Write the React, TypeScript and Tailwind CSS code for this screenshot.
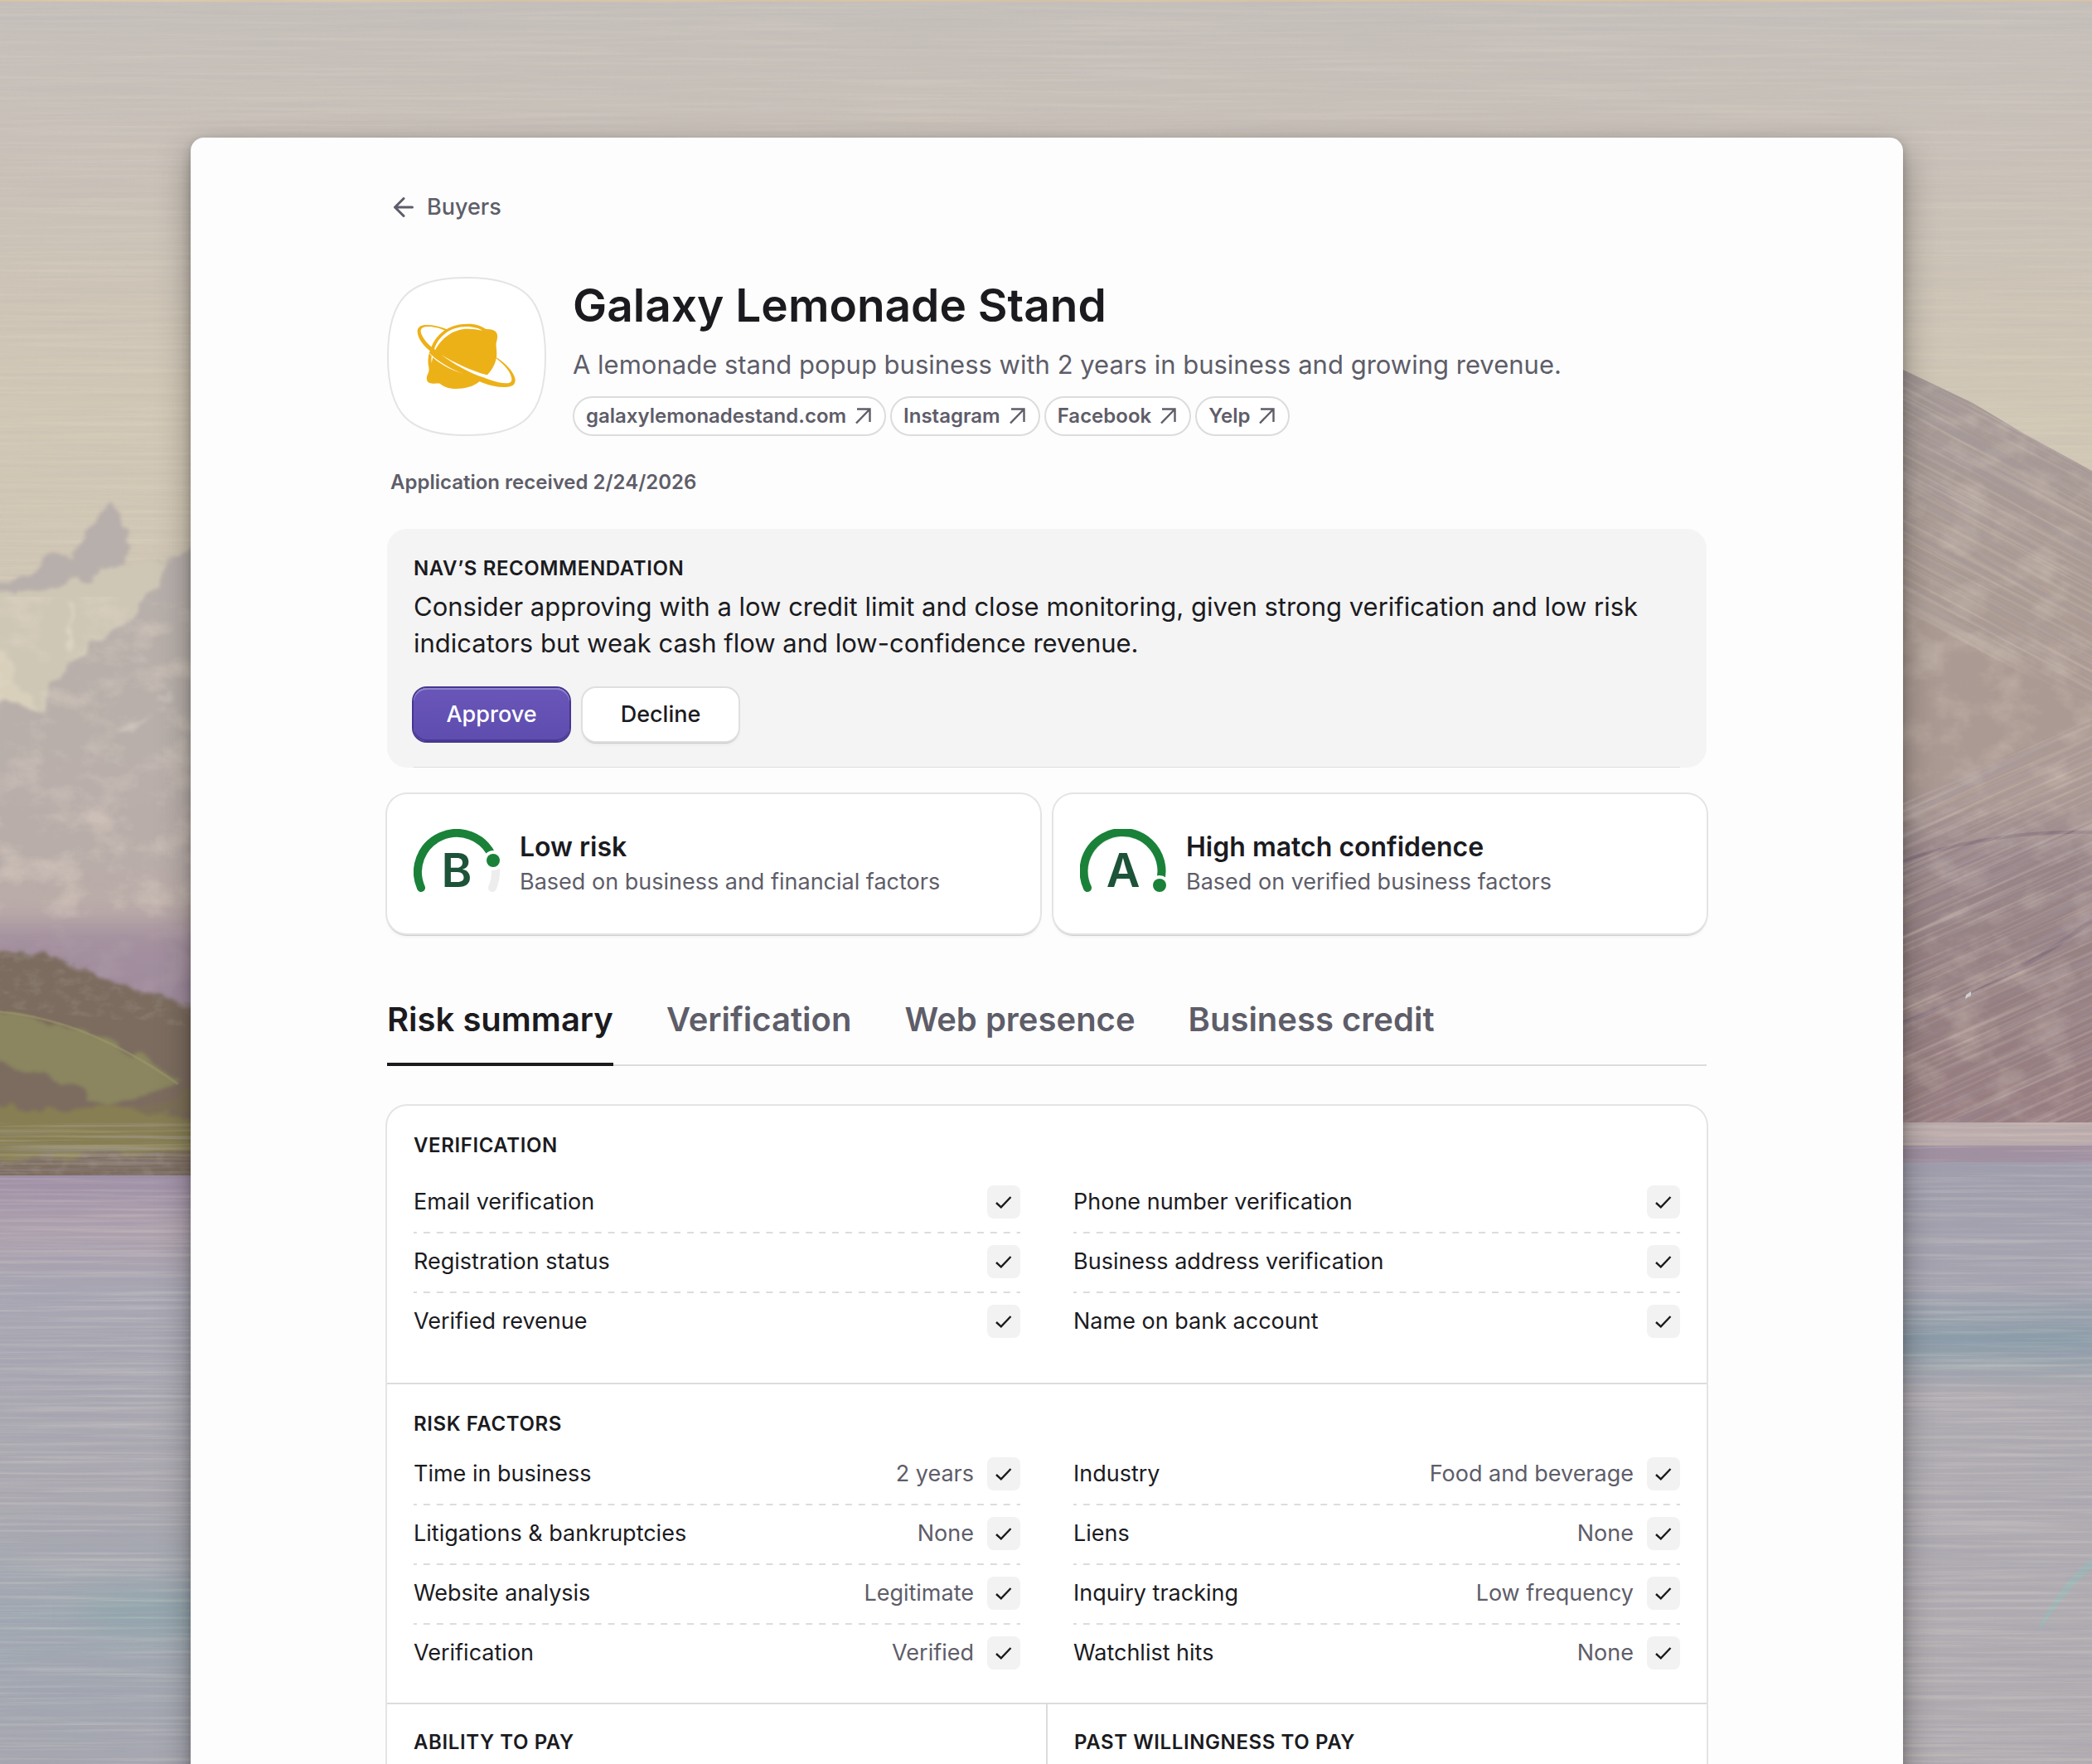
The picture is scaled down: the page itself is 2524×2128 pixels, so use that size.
import { useState } from "react";

const links = ["galaxylemonadestand.com", "Instagram", "Facebook", "Yelp"];

const tabs = ["Risk summary", "Verification", "Web presence", "Business credit"];

type Item = { label: string; value?: string };

const verification: Item[][] = [
  [{ label: "Email verification" }, { label: "Registration status" }, { label: "Verified revenue" }],
  [
    { label: "Phone number verification" },
    { label: "Business address verification" },
    { label: "Name on bank account" },
  ],
];

const riskFactors: Item[][] = [
  [
    { label: "Time in business", value: "2 years" },
    { label: "Litigations & bankruptcies", value: "None" },
    { label: "Website analysis", value: "Legitimate" },
    { label: "Verification", value: "Verified" },
  ],
  [
    { label: "Industry", value: "Food and beverage" },
    { label: "Liens", value: "None" },
    { label: "Inquiry tracking", value: "Low frequency" },
    { label: "Watchlist hits", value: "None" },
  ],
];

function Painting() {
  return (
    <svg
      className="absolute inset-0 h-full w-full"
      viewBox="0 0 2524 2128"
      preserveAspectRatio="xMidYMid slice"
      aria-hidden="true"
    >
      <defs>
        <linearGradient id="sky" x1="0" y1="0" x2="0" y2="1">
          <stop offset="0" stopColor="#c5bfba" />
          <stop offset="0.2" stopColor="#c9c1b8" />
          <stop offset="0.5" stopColor="#d1c7b5" />
          <stop offset="1" stopColor="#cfc4b2" />
        </linearGradient>
        <linearGradient id="slope" x1="0" y1="0" x2="0" y2="1">
          <stop offset="0" stopColor="#b7afab" />
          <stop offset="0.4" stopColor="#b8afaa" />
          <stop offset="0.75" stopColor="#baaba8" />
          <stop offset="1" stopColor="#9f8c9c" />
        </linearGradient>
        <linearGradient id="ridge" x1="0" y1="0" x2="0" y2="1">
          <stop offset="0" stopColor="#a49896" />
          <stop offset="0.35" stopColor="#ab9b93" />
          <stop offset="0.58" stopColor="#ab9993" />
          <stop offset="0.66" stopColor="#988588" />
          <stop offset="0.85" stopColor="#967f80" />
          <stop offset="1" stopColor="#977d80" />
        </linearGradient>
        <linearGradient id="lake" x1="0" y1="0" x2="0" y2="1">
          <stop offset="0" stopColor="#9f8fa6" />
          <stop offset="0.09" stopColor="#ada0ac" />
          <stop offset="0.2" stopColor="#a7a6b2" />
          <stop offset="0.55" stopColor="#aba9b0" />
          <stop offset="0.75" stopColor="#9fa8b1" />
          <stop offset="1" stopColor="#a6a7b0" />
        </linearGradient>
        <linearGradient id="lakeRight" x1="0" y1="0" x2="0" y2="1">
          <stop offset="0" stopColor="#9d9cab" />
          <stop offset="0.25" stopColor="#a7a5b0" />
          <stop offset="0.34" stopColor="#8a9da9" />
          <stop offset="0.42" stopColor="#aeabb1" />
          <stop offset="1" stopColor="#b0acb0" />
        </linearGradient>
        <clipPath id="ridgeClip">
          <path d="M1700 420 L2296 446 L2380 486 L2440 522 L2524 568 V1354 H1700 Z" />
        </clipPath>
        <filter id="soft" x="-50%" y="-50%" width="200%" height="200%">
          <feGaussianBlur stdDeviation="14" />
        </filter>
        <filter id="rough">
          <feTurbulence type="fractalNoise" baseFrequency="0.03 0.04" numOctaves="5" seed="4" />
          <feDisplacementMap in="SourceGraphic" scale="24" xChannelSelector="R" yChannelSelector="G" />
          <feGaussianBlur stdDeviation="2" />
        </filter>
        <filter id="strokes" x="0" y="0" width="100%" height="100%">
          <feTurbulence type="fractalNoise" baseFrequency="0.004 0.24" numOctaves="4" seed="8" />
          <feColorMatrix values="0 0 0 0 0.98  0 0 0 0 0.9  0 0 0 0 0.76  1.8 0 0 0 -0.8" />
        </filter>
        <filter id="shade" x="0" y="0" width="100%" height="100%">
          <feTurbulence type="fractalNoise" baseFrequency="0.005 0.2" numOctaves="4" seed="21" />
          <feColorMatrix values="0 0 0 0 0.35  0 0 0 0 0.32  0 0 0 0 0.45  1.8 0 0 0 -0.8" />
        </filter>
        <filter id="dabs" x="0" y="0" width="100%" height="100%">
          <feTurbulence type="fractalNoise" baseFrequency="0.02 0.03" numOctaves="5" seed="30" />
          <feColorMatrix values="0 0 0 0 0.86  0 0 0 0 0.76  0 0 0 0 0.64  2.4 0 0 0 -1.1" />
        </filter>
        <filter id="foliage" x="0" y="0" width="100%" height="100%">
          <feTurbulence type="fractalNoise" baseFrequency="0.06 0.1" numOctaves="4" seed="13" result="noise" />
          <feColorMatrix in="noise" values="0 0 0 0 0.25  0 0 0 0 0.2  0 0 0 0 0.16  3 0 0 0 -1.4" />
          <feComposite operator="in" in2="SourceGraphic" />
        </filter>
      </defs>

      <rect width="2524" height="1000" fill="url(#sky)" />
      <rect width="2524" height="2" fill="#d8c4a6" />
      <rect width="2524" height="800" filter="url(#strokes)" opacity="0.16" />
      <rect width="2524" height="800" filter="url(#shade)" opacity="0.1" />

      {/* Left mountains */}
      <g filter="url(#rough)">
        <path d="M-40 715 L20 702 L60 670 L92 668 L125 607 L150 622 L153 680 L205 675 L230 655 L700 600 V1300 H-40 Z" fill="url(#slope)" />
        <path d="M-40 718 L60 709 L105 700 L150 680 L205 676 L160 745 L95 790 L60 825 L55 858 L0 842 L-40 835 Z" fill="#cfc7b6" />
        <path d="M-20 780 L5 780 L25 830 L48 855 L-20 845 Z" fill="#d9d0bc" />
        <path d="M80 730 L84 785" stroke="#dcd4c2" strokeWidth="4" />
        <path d="M140 888 L155 872 L185 858 L160 885 Z" fill="#c8c0b8" />
        <path d="M190 840 L208 826 L204 844 Z" fill="#c4bdb6" />
      </g>
      <rect y="720" width="240" height="480" filter="url(#dabs)" opacity="0.35" />
      <rect x="-40" y="1115" width="420" height="110" fill="#957f99" opacity="0.6" filter="url(#soft)" />

      {/* Left shore */}
      <g filter="url(#rough)">
        <path d="M-40 1145 L80 1155 L140 1190 L240 1212 L400 1230 V1450 H-40 Z" fill="#7b6c5e" />
        <path d="M-40 1218 Q100 1222 220 1305 L130 1335 Q60 1290 -40 1275 Z" fill="#8b865f" />
        <path d="M-40 1340 L120 1336 L230 1350 L250 1390 L-40 1402 Z" fill="#877e53" />
        <path d="M160 1345 L250 1310 V1345 Z" fill="#7d7058" />
      </g>
      <path
        d="M-10 1145 L80 1155 L140 1190 L240 1212 V1240 L60 1222 L-10 1214 Z M-10 1390 H240 V1418 H-10 Z"
        fill="#000"
        filter="url(#foliage)"
        opacity="0.7"
      />
      <path d="M-10 1220 Q100 1226 215 1308" stroke="#a09a6c" strokeWidth="3" fill="none" opacity="0.5" />

      {/* Right mountains */}
      <g clipPath="url(#ridgeClip)">
        <rect x="1700" y="400" width="824" height="960" fill="url(#ridge)" />
        <path d="M2280 1240 Q2420 1190 2524 1110" stroke="#78626f" strokeWidth="5" fill="none" opacity="0.5" />
        <path d="M2280 1044 Q2400 1000 2530 1004" stroke="#78626f" strokeWidth="4" fill="none" opacity="0.5" />
        <g transform="rotate(28 2400 700)" opacity="0.3">
          <rect x="2000" y="340" width="900" height="440" filter="url(#strokes)" />
          <rect x="2000" y="340" width="900" height="440" filter="url(#shade)" />
        </g>
        <g transform="rotate(-24 2400 1180)" opacity="0.36">
          <rect x="2000" y="940" width="900" height="560" filter="url(#strokes)" />
          <rect x="2000" y="940" width="900" height="560" filter="url(#shade)" />
        </g>
        <rect x="2290" y="440" width="240" height="914" filter="url(#dabs)" opacity="0.25" />
      </g>
      <path d="M2372 1200 l6 -4 v5 l-7 4z" fill="#cfcfd0" />

      {/* Water */}
      <rect y="1418" width="1262" height="710" fill="url(#lake)" />
      <rect x="1262" y="1354" width="1262" height="774" fill="url(#lakeRight)" />
      <rect x="1262" y="1354" width="1262" height="28" fill="#bcacab" />
      <rect x="1262" y="1382" width="1262" height="20" fill="#a090a0" />
      <ellipse cx="200" cy="1945" rx="110" ry="26" fill="#8aa5aa" opacity="0.6" filter="url(#soft)" />
      <path d="M2458 1965 Q2490 1905 2524 1880 V1892 Q2500 1910 2462 1965 Z" fill="#9bb8b6" opacity="0.8" />
      <rect y="1354" width="2524" height="774" filter="url(#strokes)" opacity="0.3" />
      <rect y="1354" width="2524" height="774" filter="url(#shade)" opacity="0.4" />
    </svg>
  );
}

function Logo() {
  return (
    <svg className="size-48 shrink-0" viewBox="22 27 576 576" role="img" aria-label="Galaxy Lemonade Stand">
      <path
        d="M25 315 C25 105 100 30 310 30 C520 30 595 105 595 315 C595 525 520 600 310 600 C100 600 25 525 25 315 Z"
        fill="#fff"
        stroke="#e4e4e4"
        strokeWidth="6"
      />
      <g fill="#edb118">
        <path d="M181 286 C197 236 243 197 315 197 C345 197 363 205 380 216 C395 217 402 217 411 222 C426 232 422 250 417 266 C416 280 419 290 419 305 C418 337 403 363 383 383 C376 392 367 398 357 405 C335 424 305 432 272 432 C243 432 226 423 213 413 C203 412 197 414 187 413 C165 412 163 398 167 384 C174 372 174 366 173 355 C169 337 170 320 174 303 Z" />
        <path
          fillRule="evenodd"
          d="M243 218 C215 207 190 201 165 201 C140 201 131 212 132 227 C134 254 157 280 189 305 C245 350 318 390 370 411 C400 422 425 427 451 426 C477 425 487 415 486 398 C481 369 449 338 416 317 L417 322 C446 345 471 372 473 396 C474 407 467 412 451 412 C420 411 375 394 340 377 C290 353 238 322 218 308 L181 279 C160 262 146 239 144 225 C143 214 151 208 168 207 C190 206 217 213 235 223 Z"
        />
      </g>
      <g fill="#fff">
        <path d="M218 308 C260 335 325 366 383 382 C404 391 385 396 370 391 C318 373 262 342 218 308 Z" />
        <path d="M171 299 C205 332 250 360 300 378 C250 363 205 339 175 305 Z" />
        <path d="M193 288 C210 236 262 201 324 208 C342 210 355 214 367 221 C348 217 335 215 316 215 C265 214 220 246 197 291 Z" />
        <path d="M184 340 C181 329 182 320 184 311 L189 315 C186 324 184 331 184 340 Z" />
      </g>
    </svg>
  );
}

function Gauge({ grade, dot }: { grade: string; dot: [number, number] }) {
  return (
    <svg className="h-[84px] w-[104px] shrink-0" viewBox="0 0 104 84">
      <path d="M9 71 A47 47 0 1 1 95 71" fill="none" stroke="#ededed" strokeWidth="10" strokeLinecap="round" />
      <path
        d={dot[1] < 60 ? "M9 71 A47 47 0 0 1 95 33" : "M9 71 A47 47 0 1 1 96 66"}
        fill="none"
        stroke="#1a8139"
        strokeWidth="10"
        strokeLinecap="round"
      />
      <circle cx={dot[0]} cy={dot[1]} r="12" fill="#fff" />
      <circle cx={dot[0]} cy={dot[1]} r="8" fill="#1a8139" />
      <text x="52" y="70" textAnchor="middle" fontSize="56" fontWeight="600" fill="#1d5338">
        {grade}
      </text>
    </svg>
  );
}

function ScoreCard({ grade, dot, title, text }: { grade: string; dot: [number, number]; title: string; text: string }) {
  return (
    <div className="flex flex-1 items-center gap-6 rounded-3xl bg-white px-8 py-[42px] shadow-[0_0_0_2px_#e4e4e4,0_2px_0_1px_#cfcfcf,0_4px_4px_rgba(0,0,0,0.06)]">
      <Gauge grade={grade} dot={dot} />
      <div>
        <h2 className="text-[32px] leading-[44px] font-semibold">{title}</h2>
        <p className="text-[27px] leading-[40px] text-[#5e5d69]">{text}</p>
      </div>
    </div>
  );
}

function Check() {
  return (
    <span className="flex size-10 items-center justify-center rounded-lg bg-[#f2f2f2]">
      <svg className="size-6" viewBox="0 0 24 24" fill="none" stroke="#1b1b1f" strokeWidth="2.4">
        <path d="M3 13 L8.8 18.4 L20.5 6" />
      </svg>
    </span>
  );
}

function ItemList({ items }: { items: Item[] }) {
  return (
    <ul className="flex-1">
      {items.map((item, index) => (
        <li
          key={item.label}
          className={`flex h-[72px] items-center gap-4 text-[27px] leading-[40px] ${
            index > 0
              ? "bg-[linear-gradient(90deg,#dcdcdc_50%,transparent_50%)] bg-[length:16px_2px] bg-[position:-4px_0] [background-repeat:round_no-repeat]"
              : ""
          }`}
        >
          <span className="flex-1">{item.label}</span>
          {item.value && <span className="text-[#5e5d69]">{item.value}</span>}
          <Check />
        </li>
      ))}
    </ul>
  );
}

function SectionTitle({ children }: { children: string }) {
  return <h3 className="text-2xl font-semibold tracking-wide uppercase">{children}</h3>;
}

export default function App() {
  const [active, setActive] = useState(tabs[0]);

  return (
    <div className="relative h-screen overflow-hidden bg-[#c3bcb4] pt-[166px] pr-[228px] pl-[230px] font-['Inter',sans-serif] text-[#1b1b1f]">
      <Painting />

      <main className="relative min-h-full rounded-t-2xl bg-[#fdfdfd] px-[237px] pt-16 shadow-[0_16px_40px_rgba(0,0,0,0.35),0_4px_12px_rgba(0,0,0,0.2)]">
        <a href="#buyers" className="inline-flex items-center gap-4 pl-2 text-[27px] leading-[40px] font-medium text-[#5e5d69]">
          <svg className="size-6" viewBox="0 0 24 24" fill="none" stroke="currentColor" strokeWidth="3" strokeLinecap="round" strokeLinejoin="round">
            <path d="M22.5 12 H2 M12 1.5 L1.5 12 L12 22.5" />
          </svg>
          Buyers
        </a>

        {/* Business */}
        <header className="mt-16 flex gap-8">
          <Logo />
          <div>
            <h1 className="text-[55px] leading-[68px] font-semibold">Galaxy Lemonade Stand</h1>
            <p className="mt-4 text-[31px] leading-[44px] text-[#5e5d69]">
              A lemonade stand popup business with 2 years in business and growing revenue.
            </p>
            <nav className="mt-4 flex gap-[5px]">
              {links.map((link) => (
                <a
                  key={link}
                  href={`#${link}`}
                  className="flex h-12 items-center gap-2 rounded-full border-2 border-[#dcdcdc] bg-white px-3.5 text-2xl font-semibold text-[#5e5d69]"
                >
                  {link}
                  <svg className="size-6" viewBox="0 0 24 24" fill="none" stroke="currentColor" strokeWidth="2.4">
                    <path d="M5 3.5 H20.5 V19 M20.5 3.5 L4 20.5" />
                  </svg>
                </a>
              ))}
            </nav>
          </div>
        </header>

        <p className="mt-10 pl-1 text-2xl font-semibold text-[#5e5d69]">Application received 2/24/2026</p>

        {/* Recommendation */}
        <section className="mt-10 rounded-3xl bg-[#f4f4f4] px-8">
          <div className="border-b border-[#dcdcdc] pt-8 pb-[31px]">
            <SectionTitle>Nav’s recommendation</SectionTitle>
            <p className="mt-2 text-[31px] leading-[44px]">
              Consider approving with a low credit limit and close monitoring, given strong verification and low risk
              indicators but weak cash flow and low-confidence revenue.
            </p>
            <div className="mt-8 flex gap-4">
              <button className="h-16 w-[188px] rounded-2xl bg-linear-to-b from-[#6956b8] to-[#5e4cae] text-[27px] font-medium text-white shadow-[0_0_0_2px_#46368f,inset_0_2px_0_#9184cf,inset_0_-2px_0_#4a3a93]">
                Approve
              </button>
              <button className="h-16 w-[188px] rounded-2xl bg-white text-[27px] font-medium shadow-[0_0_0_2px_#dfdfdf,0_2px_0_1px_#c9c9c9,0_4px_4px_rgba(0,0,0,0.06)]">
                Decline
              </button>
            </div>
          </div>
        </section>

        <div className="mt-8 flex gap-4">
          <ScoreCard grade="B" dot={[96, 38]} title="Low risk" text="Based on business and financial factors" />
          <ScoreCard grade="A" dot={[96, 68]} title="High match confidence" text="Based on verified business factors" />
        </div>

        {/* Tabs */}
        <div role="tablist" className="mt-[72px] flex gap-16 shadow-[inset_0_-2px_0_#dcdcdc]">
          {tabs.map((tab) => (
            <button
              key={tab}
              role="tab"
              aria-selected={tab === active}
              onClick={() => setActive(tab)}
              className={`border-b-4 pt-[7px] pb-[27px] text-[40px] leading-[50px] font-semibold ${
                tab === active ? "border-[#1b1b1f]" : "border-transparent text-[#5e5d69]"
              }`}
            >
              {tab}
            </button>
          ))}
        </div>

        {/* Summary */}
        <div className="mt-12 divide-y-2 divide-[#dcdcdc] rounded-t-3xl bg-white shadow-[0_0_0_2px_#e4e4e4]">
          <section className="px-8 pt-8 pb-[38px]">
            <SectionTitle>Verification</SectionTitle>
            <div className="mt-4 flex gap-16">
              {verification.map((items, index) => (
                <ItemList key={index} items={items} />
              ))}
            </div>
          </section>
          <section className="px-8 pt-8 pb-6">
            <SectionTitle>Risk factors</SectionTitle>
            <div className="mt-2 flex gap-16">
              {riskFactors.map((items, index) => (
                <ItemList key={index} items={items} />
              ))}
            </div>
          </section>
          <div className="flex divide-x-2 divide-[#dcdcdc]">
            <section className="flex-1 px-8 pt-[30px] pb-64">
              <SectionTitle>Ability to pay</SectionTitle>
            </section>
            <section className="flex-1 px-8 pt-[30px] pb-64">
              <SectionTitle>Past willingness to pay</SectionTitle>
            </section>
          </div>
        </div>
      </main>
    </div>
  );
}
